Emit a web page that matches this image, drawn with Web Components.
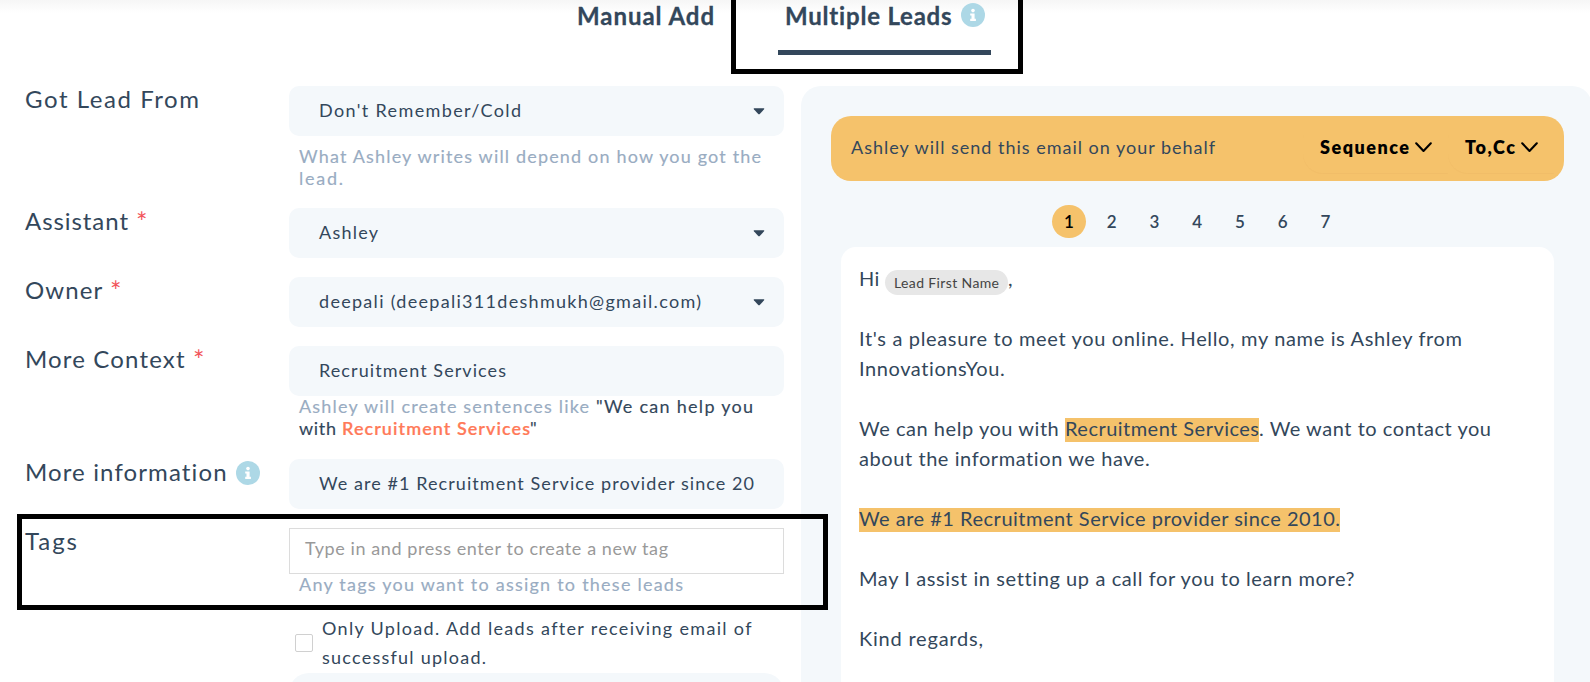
<!DOCTYPE html>
<html lang="en">
<head>
<meta charset="utf-8">
<title>Add Leads</title>
<style>
  html, body { margin: 0; height: 682px; overflow: hidden; background: #fff; }
  body { font-family: Lato, "Open Sans", sans-serif; color: #33475b; }
</style>
</head>
<body>
<leads-page></leads-page>

<script>
const define = (name, html) => customElements.define(name, class extends HTMLElement {
  constructor() {
    super();
    const t = document.createElement('template');
    t.innerHTML = html;
    this.attachShadow({ mode: 'open' }).append(t.content.cloneNode(true));
  }
});

define('leads-page', `
<style>
  :host { display: block; position: relative; width: 1590px; height: 682px; overflow: hidden; }
  main { display: grid; grid-template-columns: 759px 791px; column-gap: 17px; padding-left: 25px; height: 596px; }
  .tag-note { position: absolute; left: 17px; top: 514px; width: 801px; height: 86px; border: 5px solid #000; }
</style>
<lead-tabs></lead-tabs>
<main><lead-form></lead-form><email-preview></email-preview></main>
<div class="tag-note"></div>`);

define('lead-tabs', `
<style>
  :host { display: flex; position: relative; height: 86px; box-sizing: border-box; padding-left: 577px; font-size: 24px; font-weight: 700; line-height: 31px;
    background: linear-gradient(#f6f6f6, #fff 13px); }
  .active { display: flex; width: 213px; height: 55px; box-sizing: border-box; margin-left: 64px; padding-left: 7px; border-bottom: 5px solid #33475b; }
  info-dot { margin: 3px 0 0 9px; }
  fit-text { -webkit-text-stroke: .3px #33475b; }
  .note { position: absolute; left: 731px; top: -10px; width: 282px; height: 74px; border: 5px solid #000; }
</style>
<fit-text w="137">Manual Add</fit-text>
<div class="active"><fit-text w="167">Multiple Leads</fit-text><info-dot></info-dot></div>
<div class="note"></div>`);

define('info-dot', `
<style>:host { display: block; width: 24px; height: 24px; flex: none; } svg { display: block; }</style>
<svg width="24" height="24" viewBox="0 0 24 24"><circle cx="12" cy="12" r="12" fill="#add8e6"/><circle cx="12" cy="7.6" r="1.8" fill="#fff"/><path d="M9.2 10.4h4.4v5.4h1.3v2.2H9.2v-2.2h1.3v-3.2H9.2z" fill="#fff"/></svg>`);

define('form-row', `
<style>
  :host { display: grid; grid-template-columns: 264px 495px; align-content: start; }
  .label { display: flex; font-size: 24px; line-height: 26px; }
</style>
<div class="label"><slot name="label"></slot></div>
<div><slot></slot></div>`);

define('field-box', `
<style>
  :host { display: flex; justify-content: space-between; height: 50px; box-sizing: border-box; padding: 0 19px 2px 30px; align-items: center; border-radius: 10px; background: #f4f8fb; font-size: 18px; line-height: 24px; }
  svg { display: none; margin-top: 2px; }
  :host([select]) svg { display: block; }
</style>
<slot></slot><svg width="12" height="7" viewBox="0 0 12 7"><path d="M1.2.3h9.6q.9.1.3 1L7 5.8q-1 1-2 0L.9 1.3Q.3.4 1.2.3z" fill="#33475b"/></svg>`);

define('help-text', `
<style>
  :host { display: block; padding-left: 10px; font-size: 18px; line-height: 22px; color: #99acc2; }
</style><slot></slot>`);

define('lead-form', `
<style>
  :host { display: grid; grid-template-rows: 122px 69px 69px 113px 69px 86px 59px 60px; }
  .star { color: #f2545b; font-size: 27px; line-height: 28px; }
  info-dot { margin: 2px 0 0 9px; }
  .line { display: flex; }
  .dark { color: #33475b; }
  .hot { color: #ff7a59; font-weight: 600; -webkit-text-stroke: .2px #ff7a59; }
  help-text { margin-top: -1px; -webkit-text-stroke: .15px currentColor; }
  .tag-input { height: 46px; box-sizing: border-box; border: 1px solid #dcdcdc; padding: 7px 15px; font-size: 18px; line-height: 24px; color: #999; background: #fff; }
  .check { display: flex; font-size: 18px; line-height: 29px; padding-left: 270px; }
  .box { width: 18px; height: 18px; box-sizing: border-box; border: 1px solid #d0d0d0; border-radius: 2px; margin: 20px 9px 0 0; }
  .upload { margin-left: 264px; background: #f4f8fb; border-radius: 20px; }
</style>
<form-row><fit-text slot="label" w="174">Got Lead From</fit-text>
  <field-box select><fit-text w="202">Don't Remember/Cold</fit-text></field-box>
  <help-text style="margin-top:9px"><div class="line"><fit-text w="462">What Ashley writes will depend on how you got the</fit-text></div><div class="line"><fit-text w="44">lead.</fit-text></div></help-text>
</form-row>
<form-row><fit-text slot="label" w="111">Assistant </fit-text><fit-text slot="label" class="star" w="11">*</fit-text>
  <field-box select><fit-text w="59">Ashley</fit-text></field-box></form-row>
<form-row><fit-text slot="label" w="85">Owner </fit-text><fit-text slot="label" class="star" w="11">*</fit-text>
  <field-box select><fit-text w="382">deepali (deepali311deshmukh@gmail.com)</fit-text></field-box></form-row>
<form-row><fit-text slot="label" w="168">More Context </fit-text><fit-text slot="label" class="star" w="11">*</fit-text>
  <field-box><fit-text w="187">Recruitment Services</fit-text></field-box>
  <help-text><div class="line"><fit-text w="297">Ashley will create sentences like </fit-text><fit-text class="dark" w="157">"We can help you</fit-text></div><div class="line"><fit-text class="dark" w="43">with </fit-text><fit-text class="hot" w="188">Recruitment Services</fit-text><fit-text class="dark" w="8">"</fit-text></div></help-text></form-row>
<form-row><fit-text slot="label" w="202">More information</fit-text><info-dot slot="label"></info-dot>
  <field-box><fit-text w="435">We are #1 Recruitment Service provider since 20</fit-text></field-box></form-row>
<form-row><fit-text slot="label" w="52">Tags</fit-text>
  <div class="tag-input"><fit-text w="363">Type in and press enter to create a new tag</fit-text></div>
  <help-text><div class="line"><fit-text w="384">Any tags you want to assign to these leads</fit-text></div></help-text></form-row>
<div class="check"><span class="box"></span><div><div class="line"><fit-text w="429">Only Upload. Add leads after receiving email of</fit-text></div><div class="line"><fit-text w="164">successful upload.</fit-text></div></div></div>
<div class="upload"></div>`);

define('drop-button', `
<style>
  :host { display: flex; align-items: center; height: 53px; box-sizing: border-box; padding: 0 16px 0 17px; border-radius: 20px 0 0 20px; color: #000; font-size: 18px; font-weight: 800; line-height: 24px; box-shadow: 0 1px 1px rgba(120,70,0,.03); }
  svg { margin: 2px 0 0 6px; }
</style><slot></slot>
<svg width="17" height="11" viewBox="0 0 17 11"><path d="M1.2 1.3l7.3 7.6 7.3-7.6" fill="none" stroke="#000" stroke-width="2.1" stroke-linecap="round" stroke-linejoin="round"/></svg>`);

define('page-steps', `
<style>
  :host { display: flex; gap: 8.75px; margin: 24px 0 9px 221px; font-size: 17px; font-weight: 600; line-height: 33px; text-align: center; }
  span { width: 34px; height: 33px; border-radius: 17px; }
  .on { background: #f5c26b; color: #000; }
</style>
<span class="on">1</span><span>2</span><span>3</span><span>4</span><span>5</span><span>6</span><span>7</span>`);

define('email-preview', `
<style>
  :host { display: block; background: #f4f8fb; border-radius: 20px 20px 0 0; padding: 30px 27px 0 30px; overflow: hidden; }
  .banner { display: flex; height: 65px; width: 733px; box-sizing: border-box; padding: 0 10px 0 20px; border-radius: 20px; background: #f5c26b; font-size: 18px; line-height: 24px; }
  .banner > fit-text { margin: 19px auto 0 0; }
  drop-button { margin-top: 4px; }
  article { width: 713px; height: 435px; margin-left: 10px; box-sizing: border-box; padding: 16px 18px; border-radius: 15px 15px 0 0; background: #fff; font-size: 20px; line-height: 30px; }
  p { display: flex; height: 30px; margin: 0; }
  .gap { margin-top: 30px; }
  .pill { height: 25px; width: 123px; box-sizing: border-box; padding-left: 9px; margin-top: 7px; border-radius: 13px; background: #e7e7e7; color: #444; font-size: 14px; line-height: 25px; }
  mark { display: block; height: 24px; line-height: 24px; margin-top: 5px; background: #f5c26b; color: inherit; }
  mark fit-text { position: relative; top: -2px; }
</style>
<div class="banner"><fit-text w="364">Ashley will send this email on your behalf</fit-text>
  <drop-button><fit-text w="89">Sequence</fit-text></drop-button>
  <drop-button><fit-text w="50">To,Cc</fit-text></drop-button></div>
<page-steps></page-steps>
<article>
  <p><fit-text w="26">Hi </fit-text><span class="pill"><fit-text w="105">Lead First Name</fit-text></span><fit-text w="6">,</fit-text></p>
  <p class="gap"><fit-text w="603">It's a pleasure to meet you online. Hello, my name is Ashley from</fit-text></p>
  <p><fit-text w="146">InnovationsYou.</fit-text></p>
  <p class="gap"><fit-text w="206">We can help you with </fit-text><mark><fit-text w="194">Recruitment Services</fit-text></mark><fit-text w="232">. We want to contact you</fit-text></p>
  <p><fit-text w="291">about the information we have.</fit-text></p>
  <p class="gap"><mark><fit-text w="481">We are #1 Recruitment Service provider since 2010.</fit-text></mark></p>
  <p class="gap"><fit-text w="495">May I assist in setting up a call for you to learn more?</fit-text></p>
  <p class="gap"><fit-text w="124">Kind regards,</fit-text></p>
</article>`);

/* A run of text tracked so that it fills the width given in its "w" attribute. */
customElements.define('fit-text', class extends HTMLElement {
  constructor() {
    super();
    this.attachShadow({ mode: 'open' }).innerHTML =
      '<style>:host{display:block;flex:none;white-space:pre}span{white-space:pre}</style><span><slot></slot></span>';
  }
  connectedCallback() {
    const w = +this.getAttribute('w');
    const span = this.shadowRoot.querySelector('span');
    const n = this.textContent.length;
    this.style.width = w + 'px';
    const natural = span.getBoundingClientRect().width;
    if (n > 1) span.style.letterSpacing = ((w - natural) / (n - (this.textContent.endsWith(' ') ? 0 : 1))).toFixed(3) + 'px';
  }
});
</script>
</body>
</html>
